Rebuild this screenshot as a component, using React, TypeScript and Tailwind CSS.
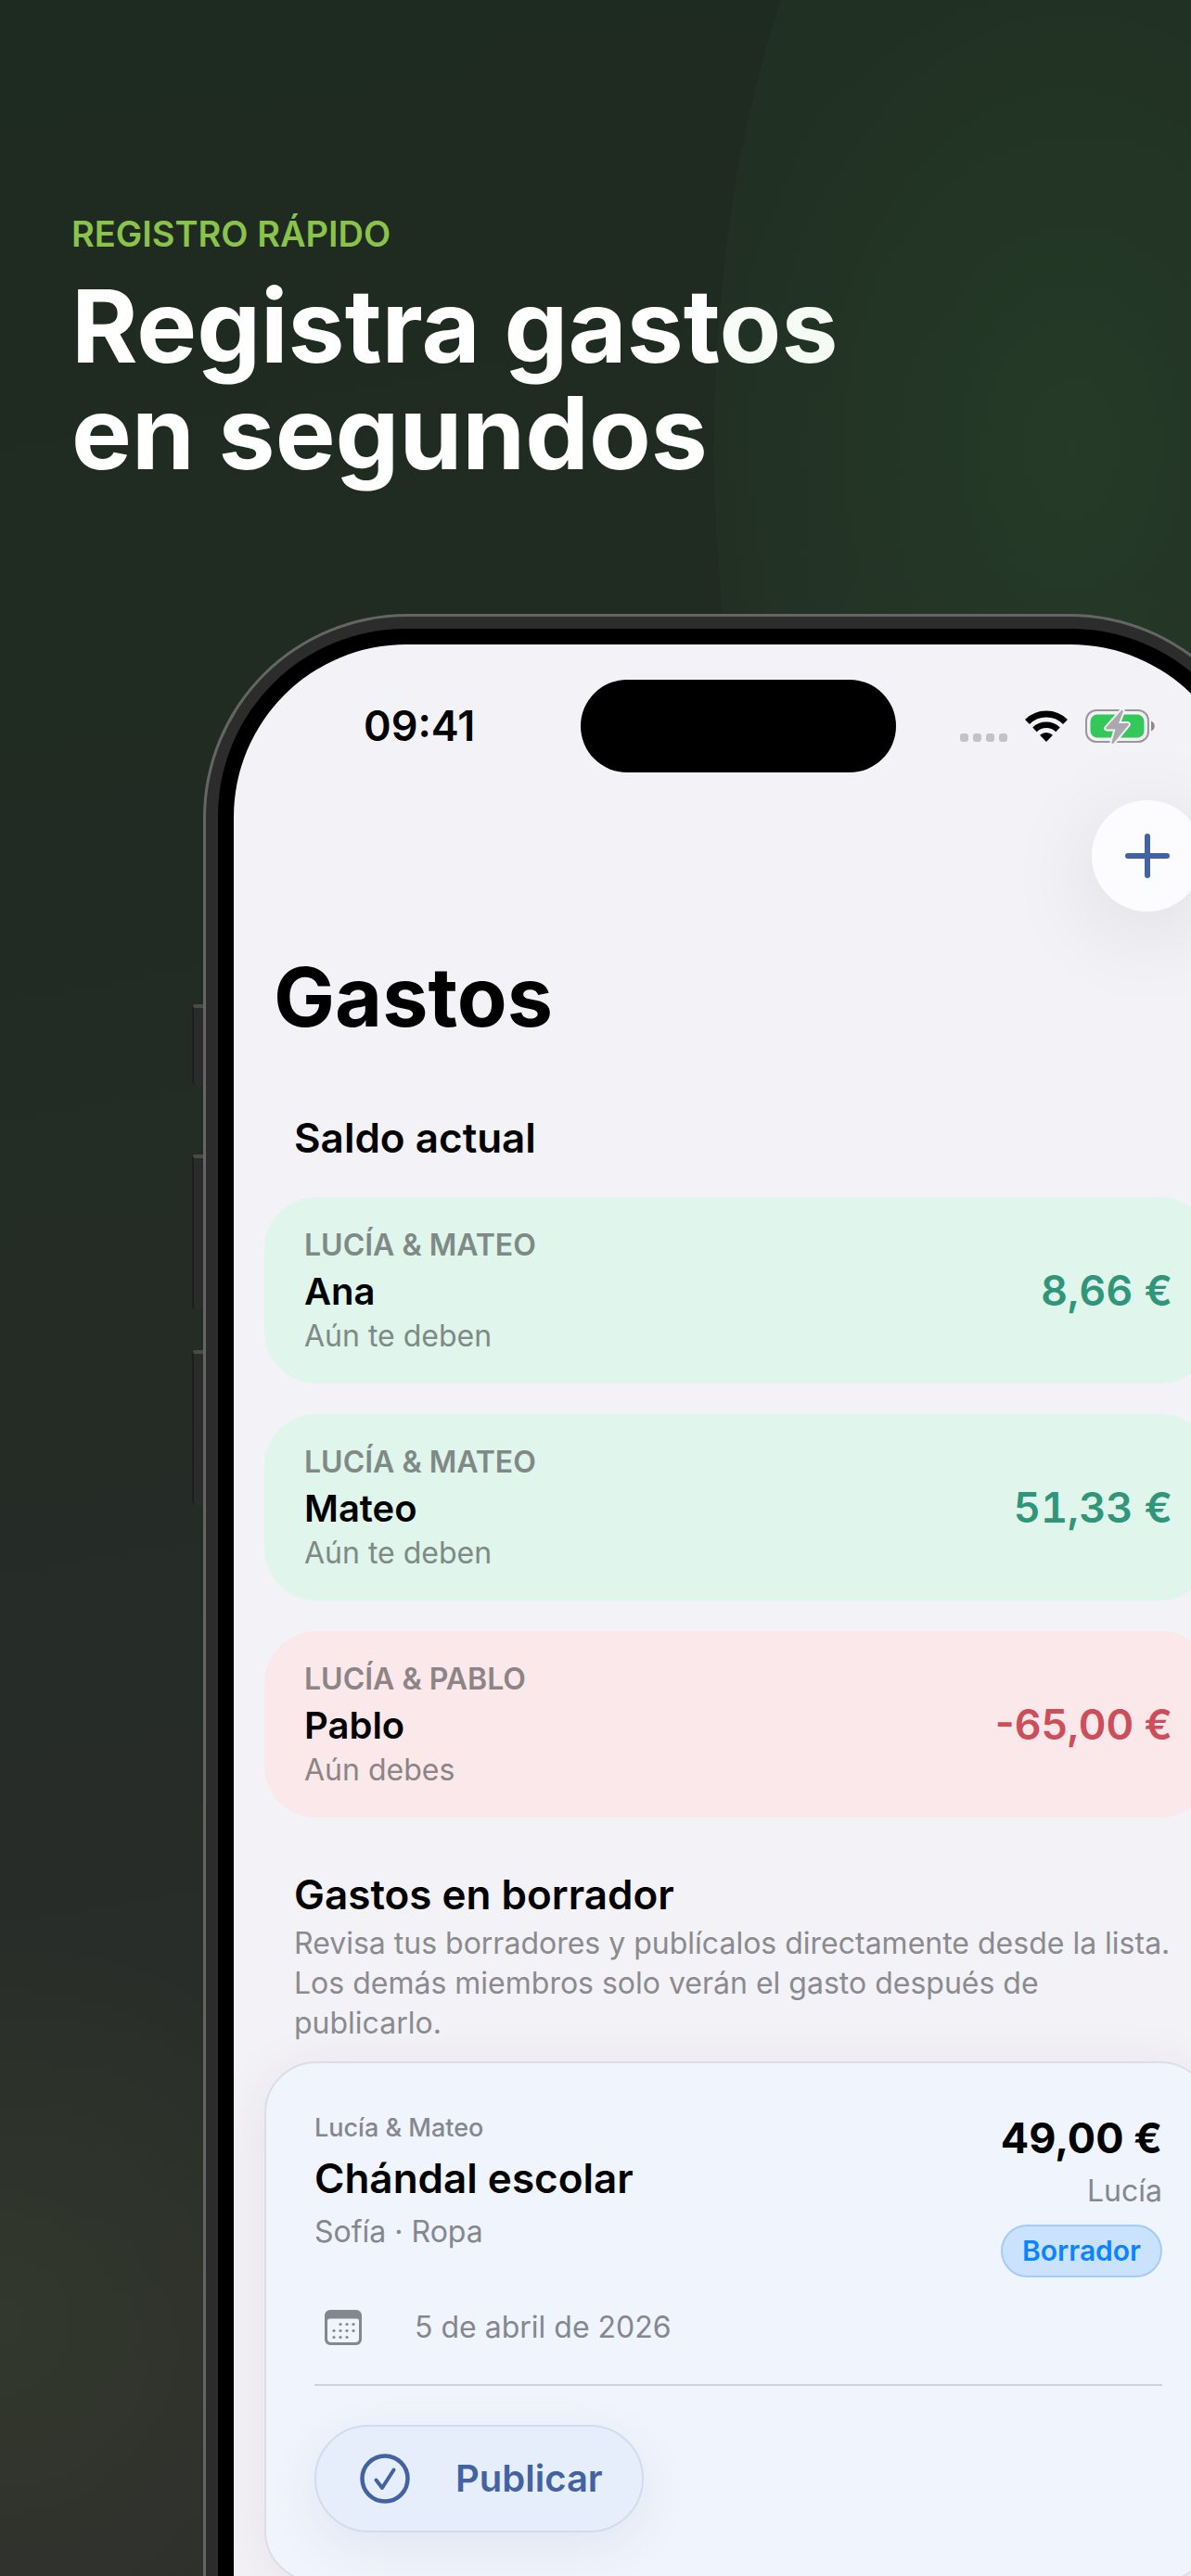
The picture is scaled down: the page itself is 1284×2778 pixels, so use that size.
import React from 'react';
import { Plus } from 'lucide-react';

const balances = [
    { group: 'LUCÍA & MATEO', name: 'Ana', status: 'Aún te deben', amount: '8,66 €', debt: false },
    { group: 'LUCÍA & MATEO', name: 'Mateo', status: 'Aún te deben', amount: '51,33 €', debt: false },
    { group: 'LUCÍA & PABLO', name: 'Pablo', status: 'Aún debes', amount: '-65,00 €', debt: true },
];

const WifiIcon = () => (
    <svg width="46" height="34" viewBox="0 0 46 34" aria-hidden="true">
        <path d="M2.5 12.5a29 29 0 0 1 41 0" fill="none" stroke="#000" strokeWidth="7" />
        <path d="M10.5 20.8a18 18 0 0 1 25 0" fill="none" stroke="#000" strokeWidth="6.5" />
        <path d="M23 34l-7-7.2a10.4 10.4 0 0 1 14 0z" fill="#000" />
    </svg>
);

const BatteryIcon = () => (
    <svg width="76" height="38" viewBox="0 0 76 38" aria-hidden="true">
        <rect x="1" y="2" width="67" height="34" rx="11" fill="none" stroke="#98979c" strokeWidth="2" />
        <rect x="5.5" y="6.5" width="58" height="25" rx="7.5" fill="#34c759" />
        <path d="M71 13.5c5 2 5 9 0 11z" fill="#8b8b8e" />
        <path
            d="M39.5 1.5L22.5 20.5c-.8 1 -.3 2 1 2h9L28.5 36.5c-.4 1.5 1 2 2 1L46.5 18c.9-1 .3-2-1-2h-9.500L41 3z"
            fill="#aaa9ae"
            stroke="#f3f2f7"
            strokeWidth="4"
            strokeLinejoin="round"
            paintOrder="stroke"
        />
    </svg>
);

const CalendarIcon = () => (
    <svg width="42" height="40" viewBox="0 0 42 40" fill="#85878f" aria-hidden="true">
        <path
            fillRule="evenodd"
            d="M7 1h28a6 6 0 0 1 6 6v26a6 6 0 0 1-6 6H7a6 6 0 0 1-6-6V7a6 6 0 0 1 6-6zM6.500 10.500a2.500 2.500 0 0 0-2.500 2.500v19a4 4 0 0 0 4 4h26a4 4 0 0 0 4-4V13a2.500 2.500 0 0 0-2.500-2.500z"
        />
        {[
            [18, 16.5], [25, 16.5], [32, 16.5],
            [11, 23.5], [18, 23.5], [25, 23.5], [32, 23.5],
            [11, 30.5], [18, 30.5], [25, 30.5],
        ].map(([cx, cy]) => (
            <circle key={`${cx}-${cy}`} cx={cx} cy={cy} r="1.6" />
        ))}
    </svg>
);

const CheckCircleIcon = () => (
    <svg width="54" height="54" viewBox="0 0 54 54" fill="none" stroke="#4262a3" aria-hidden="true">
        <circle cx="27" cy="27" r="24.5" strokeWidth="4.5" />
        <path d="M17.5 28.5l6.5 8.500 12.5-19.500" strokeWidth="4" strokeLinecap="round" strokeLinejoin="round" />
    </svg>
);

const StatusBar = () => (
    <div className="relative flex h-[100px] items-center justify-between pr-[94px] pl-[140px]">
        <span className="text-[45px] leading-[56px] font-semibold">09:41</span>
        {/* dynamic island */}
        <div className="absolute top-0 left-1/2 h-full w-[340px] -translate-x-1/2 rounded-full bg-black" />
        <div className="flex items-center gap-[19px]">
            <div className="flex gap-[5px] pt-[25px]">
                <i className="h-[9px] w-[9px] rounded-[3px] bg-[#c3c2c8]" />
                <i className="h-[9px] w-[9px] rounded-[3px] bg-[#c3c2c8]" />
                <i className="h-[9px] w-[9px] rounded-[3px] bg-[#c3c2c8]" />
                <i className="h-[9px] w-[9px] rounded-[3px] bg-[#c3c2c8]" />
            </div>
            <WifiIcon />
            <BatteryIcon />
        </div>
    </div>
);

const BalanceCard = ({ group, name, status, amount, debt }: any) => (
    <li
        className={`flex items-center justify-between rounded-[56px] px-[43px] py-[27px] ${
            debt ? 'bg-[#fae8ea]' : 'bg-[#e0f5eb]'
        }`}
    >
        <div>
            <p className={`text-[32px] leading-[50px] font-semibold ${debt ? 'text-[#8c8486]' : 'text-[#7f8986]'}`}>{group}</p>
            <p className="text-[40px] leading-[49px] font-semibold">{name}</p>
            <p className={`text-[32px] leading-[48px] ${debt ? 'text-[#8c8486]' : 'text-[#7f8986]'}`}>{status}</p>
        </div>
        <span className={`text-[45px] leading-[56px] font-semibold ${debt ? 'text-[#cd4d59]' : 'text-[#30967a] tabular-nums'}`}>
            {amount}
        </span>
    </li>
);

const DraftCard = () => (
    <article className="rounded-[56px] border-2 border-[#dcdee4] bg-[#eff4fd] p-[52px] shadow-[0_10px_60px_rgba(80,50,60,0.08)]">
        <div className="flex items-start justify-between">
            <div>
                <p className="text-[27px] leading-[36px] font-medium text-[#85878f]">Lucía &amp; Mateo</p>
                <h3 className="mt-[8px] text-[44px] leading-[56px] font-semibold">Chándal escolar</h3>
                <p className="mt-[8px] text-[32px] leading-[44px] text-[#85878f]">Sofía · Ropa</p>
            </div>
            <div className="flex flex-col items-end">
                <p className="text-[45px] leading-[58px] font-bold">49,00 €</p>
                <p className="mt-[6px] text-[32px] leading-[44px] text-[#85878f]">Lucía</p>
                <span className="mt-[14px] rounded-full border-2 border-[#a0cdfb] bg-[#cae2fb] px-[21px] py-[8px] text-[30px] leading-[37px] font-semibold text-[#0a84ff]">
                    Borrador
                </span>
            </div>
        </div>
        <div className="mt-[32px] flex items-center gap-[56px] pl-[10px]">
            <CalendarIcon />
            <time dateTime="2026-04-05" className="text-[32px] leading-[44px] text-[#85878f]">
                5 de abril de 2026
            </time>
        </div>
        <hr className="mt-[39px] border-t-2 border-[#cfd3dd]" />
        <button
            type="button"
            className="mt-[42px] flex h-[116px] items-center gap-[49px] rounded-full border-2 border-[#d0dcef] bg-[#e6eefc] pr-[42px] pl-[47px] text-[40px] font-semibold text-[#4262a3] shadow-[0_16px_56px_rgba(60,70,90,0.08)]"
        >
            <CheckCircleIcon />
            Publicar
        </button>
    </article>
);

const SideButton = ({ className }: { className: string }) => (
    <div className={`absolute -left-[12px] w-[12px] rounded-l-[4px] border-t-4 border-l-2 border-t-[#484b48] border-l-[#1d1f1d] bg-[#2b2b2b] ${className}`} />
);

const Phone = () => (
    <div className="relative mt-[138px] -mr-[89px] ml-[219px] flex-1">
        <SideButton className="top-[421px] h-[87px]" />
        <SideButton className="top-[583px] h-[167px]" />
        <SideButton className="top-[794px] h-[167px]" />
        <div className="rounded-t-[220px] border-[3px] border-b-0 border-[#646664] bg-[#2c2c2c] p-[13px] pb-0">
            <div className="rounded-t-[202px] bg-black p-[17px] pb-0">
                <div className="rounded-t-[186px] bg-[#f3f2f7] px-[33px] pt-[38px] pb-[60px] text-black">
                    <div className="-mx-[33px]">
                        <StatusBar />
                    </div>
                    <div className="mt-[30px] flex justify-end pr-[10px]">
                        <button
                            type="button"
                            aria-label="Añadir gasto"
                            className="flex h-[120px] w-[120px] items-center justify-center rounded-full bg-[#fcfcfe] text-[#4262a3] shadow-[0_20px_100px_rgba(0,0,0,0.1)]"
                        >
                            <Plus size={72} strokeWidth={2} />
                        </button>
                    </div>
                    <h2 className="mt-[36px] pl-[10px] text-[88px] leading-[112px] font-bold">Gastos</h2>
                    <h3 className="mt-[68px] pl-[32px] text-[44px] leading-[56px] font-semibold">Saldo actual</h3>
                    <ul className="mt-[36px] flex flex-col gap-[33px]">
                        {balances.map((item) => (
                            <BalanceCard key={item.name} {...item} />
                        ))}
                    </ul>
                    <div className="mt-[55px] mb-[20px] pl-[32px]">
                        <h3 className="text-[44px] leading-[56px] font-semibold">Gastos en borrador</h3>
                        <p className="mt-[3px] text-[32px] leading-[43px] text-[#8a8a8f]">
                            Revisa tus borradores y publícalos directamente desde la lista.
                            <br />
                            Los demás miembros solo verán el gasto después de
                            <br />
                            publicarlo.
                        </p>
                    </div>
                    <DraftCard />
                </div>
            </div>
        </div>
    </div>
);

const App = () => {
    return (
        <main className="relative flex h-screen flex-col overflow-hidden bg-[radial-gradient(420px_420px_at_0%_90%,rgba(139,195,74,0.07),transparent),linear-gradient(170deg,#1e2b20_0%,#202b22_25%,#262c27_60%,#2f2f2d_100%)] font-['Inter',sans-serif]">
            <header className="px-[77px] pt-[230px] text-white">
                <p className="text-[38px] leading-[44px] font-semibold text-[#8bc34a]">REGISTRO RÁPIDO</p>
                <h1 className="mt-[20px] text-[109px] leading-[115px] font-bold">
                    Registra gastos
                    <br />
                    en segundos
                </h1>
            </header>
            {/* green glow, over the headline */}
            <div className="pointer-events-none absolute top-[-347px] left-[60%] h-[1660px] w-[60%] rounded-[50%] bg-[radial-gradient(385px_560px_at_center,rgba(76,175,80,0.12),rgba(76,175,80,0.04))]" />
            <Phone />
        </main>
    );
};

export default App;
